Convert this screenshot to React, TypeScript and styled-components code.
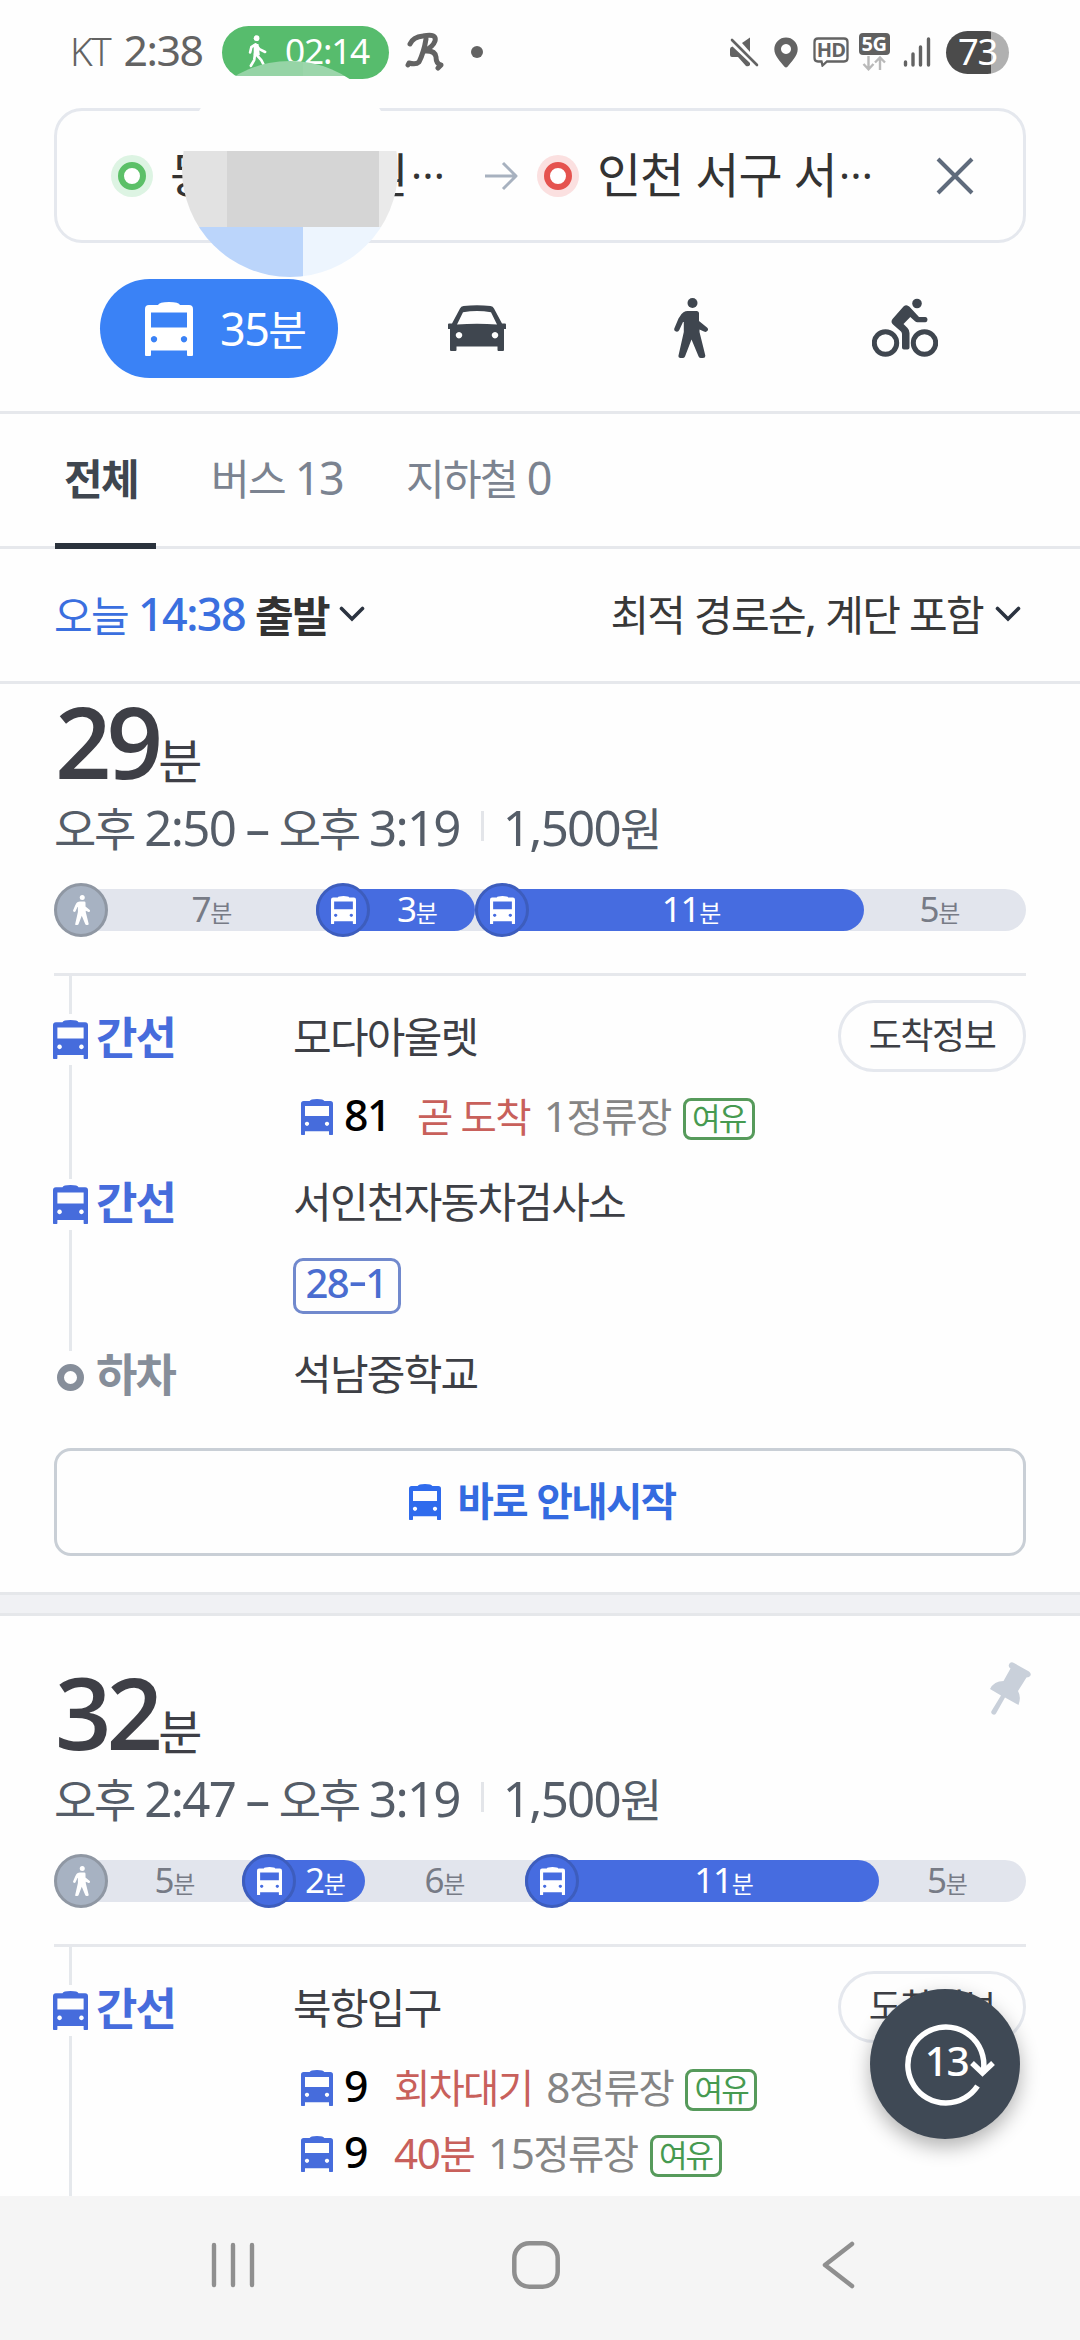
import React from "react";
import styled, { createGlobalStyle } from "styled-components";

const GlobalStyle = createGlobalStyle`
  *, *::before, *::after { box-sizing: border-box; }
  html, body { margin: 0; padding: 0; background: #fefefe; }
  body {
    font-family: "Noto Sans", "Open Sans", "Noto Sans CJK KR", sans-serif;
    color: #3d3f45;
    -webkit-font-smoothing: antialiased;
  }
`;

/* ---------- text ---------- */

const Line = styled.span<{ $size: number; $color?: string; $weight?: number; $ls?: number }>`
  display: inline-flex;
  align-items: baseline;
  white-space: pre;
  flex: none;
  font-size: ${(p) => p.$size}px;
  line-height: ${(p) => p.$size}px;
  font-weight: ${(p) => p.$weight ?? 400};
  color: ${(p) => p.$color ?? "inherit"};
  letter-spacing: ${(p) => p.$ls ?? -0.04}em;
`;
const Hangul = styled.span`
  font-family: "Noto Sans CJK KR", sans-serif;
  word-spacing: 0.05em;
`;
const Latin = styled.span`
  font-family: "Noto Sans", "Open Sans", sans-serif;
  font-size: 1.07em;
  letter-spacing: -0.035em;
`;
const Ellipsis = styled.span`
  font-family: "Open Sans", "Noto Sans", sans-serif;
  font-size: 0.92em;
  margin-left: 2px;
  transform: translateY(-14px);
`;

type TextProps = { size: number; color?: string; weight?: number; ls?: number; clipped?: boolean; children: string };
function Text({ size, color, weight, ls, clipped, children }: TextProps) {
  const runs = children.match(/[가-힣 ]+|[^가-힣 ]+/g) ?? [];
  return (
    <Line $size={size} $color={color} $weight={weight} $ls={ls}>
      {runs.map((run, i) => (/[가-힣 ]/.test(run) ? <Hangul key={i}>{run}</Hangul> : <Latin key={i}>{run}</Latin>))}
      {clipped && <Ellipsis>…</Ellipsis>}
    </Line>
  );
}

/* ---------- icons ---------- */

const Svg = styled.svg`
  display: block;
  flex: none;
`;

const BusIcon = ({ w, h, color }: { w: number; h: number; color: string }) => (
  <Svg width={w} height={h} viewBox="0 0 48 54" preserveAspectRatio="none">
    <path
      fill={color}
      fillRule="evenodd"
      d="M13 3Q14 0 24 0T35 3H44Q48 3 48 7V53Q48 54 47 54H43Q42 54 42 53V48.5H6V53Q6 54 5 54H1Q0 54 0 53V7Q0 3 4 3ZM6 10.5V25.5H42V10.5ZM9 34a3.2 3.2 0 1 0 .01 0ZM39 34a3.2 3.2 0 1 0 .01 0Z"
    />
  </Svg>
);

const CarIcon = () => (
  <Svg width={58} height={46} viewBox="0 0 58 46">
    <path
      fill="#3f464f"
      fillRule="evenodd"
      d="M12 3.5Q13 1.4 15.500 1.100Q29-.8 42.500 1.100Q45 1.400 46 3.500L54 18.500H57Q58 18.500 58 19.500V24H56V45Q56 46 55 46H50.500Q49.500 46 49.500 45V41.500H8.500V45Q8.500 46 7.500 46H3Q2 46 2 45V24H0V19.500Q0 18.500 1 18.500H4ZM15 7.200L9 19.500Q29 18.200 49 19.500L43 7.200Q29 4.800 15 7.200ZM11 27a3.200 3.200 0 1 0 .01 0ZM47 27a3.200 3.200 0 1 0 .01 0Z"
    />
  </Svg>
);

const WalkIcon = ({ w, h, color }: { w: number; h: number; color: string }) => (
  <Svg width={w} height={h} viewBox="0 0 34 60">
    <circle cx="18.500" cy="5" r="5" fill={color} />
    <path
      fill={color}
      d="M13.500 13H22.500Q25 13 25 15.500V23L33 29.500Q34.800 31 33.500 32.800T30 33.600L25.500 31.500V34L31.200 57Q31.800 60 29 60H27Q25.300 60 24.600 58.500L17.500 41.500L11 58.500Q10.300 60 8.500 60H6.500Q4 60 4.500 57.500L9.800 34V24H9L5.300 32Q4.300 34.300 2 33.600T.3 30.500L4.500 20.500Q7 15.500 9.500 14.200Q11.500 13 13.500 13Z"
    />
  </Svg>
);

const BikeIcon = () => (
  <Svg width={66} height={60} viewBox="0 0 66 60">
    <g fill="none" stroke="#3f464f" strokeWidth="5">
      <circle cx="13.500" cy="45" r="11.200" />
      <circle cx="52.500" cy="45" r="11.200" />
    </g>
    <circle cx="45" cy="5.500" r="4.800" fill="#3f464f" />
    <path
      fill="#3f464f"
      d="M31.500 8.500Q34.500 5.800 37.500 8.700L47 19H53.500Q55.500 19 55.500 21.500T53.500 24.300H45.500Q44 24.300 43 23.300L38.300 19L31.500 26L35.500 30Q37.500 32 37.500 35V49.500Q37.500 51.500 35.500 51.500H32Q30 51.500 30 49.500V36Q30 34.500 29 33.500L21 26.500Q18.300 24 20.500 21Z"
    />
  </Svg>
);

const Chevron = () => (
  <Svg width={26} height={18} viewBox="0 0 26 18">
    <path d="M2.500 3.500L13 14L23.500 3.500" fill="none" stroke="#2b3340" strokeWidth="3.600" strokeLinecap="round" />
  </Svg>
);

/* ---------- status bar ---------- */

const Screen = styled.div`
  position: relative;
  width: 1080px;
  height: 2340px;
  overflow: hidden;
  display: flex;
  flex-direction: column;
  background: #fefefe;
`;
const StatusBar = styled.div`
  height: 108px;
  padding: 25px 71px 0 70px;
  display: flex;
  justify-content: space-between;
  align-items: flex-start;
`;
const StatusGroup = styled.div<{ $gap: number }>`
  height: 54px;
  display: flex;
  align-items: center;
  gap: ${(p) => p.$gap}px;
`;
const Clock = styled.div`
  display: flex;
  align-items: baseline;
  gap: 13px;
  width: 138px;
  padding-bottom: 5px;
`;
const TimerPill = styled.div`
  width: 167px;
  height: 53px;
  margin-right: 2px;
  padding: 0 0 2px 26px;
  border-radius: 27px;
  background: #57bc6d;
  display: flex;
  align-items: center;
  gap: 18px;
`;
const TimerValue = styled.div`
  display: flex;
  padding-bottom: 1px;
`;
const Dot = styled.div`
  width: 12px;
  height: 12px;
  margin-left: 12px;
  border-radius: 50%;
  background: #636363;
`;
const NetworkBox = styled.div`
  width: 32px;
  height: 38px;
  margin-right: -2px;
  display: flex;
  flex-direction: column;
  align-items: center;
  gap: 1px;
`;
const NetworkLabel = styled.div`
  width: 31px;
  height: 22px;
  border-radius: 4px;
  background: #606060;
  color: #fff;
  font: 700 20px/22px "Open Sans", sans-serif;
  letter-spacing: -0.5px;
  text-align: center;
`;
const Battery = styled.div`
  width: 63px;
  height: 43px;
  padding-bottom: 2px;
  border-radius: 22px;
  background: linear-gradient(90deg, #4b4b4b 0 45px, #b0b0b0 45px);
  display: flex;
  align-items: center;
  justify-content: center;
`;

const Runner = () => (
  <Svg width={19} height={33} viewBox="0 0 20 34">
    <circle cx="9" cy="3" r="3" fill="#fff" />
    <g fill="none" stroke="#fff" strokeWidth="2.800" strokeLinecap="round" strokeLinejoin="round">
      <path d="M9 18L9.500 21L14 26L17 32" />
      <path d="M7.500 19L6.500 26L3 32" />
      <path d="M2.200 18L3.500 12.500L8 9.500L12 14.500L18 17.500" />
    </g>
    <path d="M6 9H11L12.500 21H6Z" fill="#fff" />
  </Svg>
);

const RunLogo = () => (
  <Svg width={40} height={40} viewBox="0 0 40 40">
    <g fill="none" stroke="#636363" strokeWidth="5" strokeLinecap="round" strokeLinejoin="round">
      <path d="M5 12Q8 5 18 4Q32 1 30 9Q28 15 19 19Q30 18 31 25Q31 32 36 33L33 36" />
      <path d="M21 7Q19 20 14 30Q11 33 4 31L3 33" />
    </g>
  </Svg>
);

const MuteIcon = () => (
  <Svg width={30} height={30} viewBox="0 0 30 30">
    <path d="M13 6L21 0.500V15Z" fill="#636363" />
    <path d="M3.500 9.500L21 26V28Q19.500 30 17 29L9 20H3Q1 20 1 18V12Q1 10 3.500 9.500Z" fill="#636363" />
    <path d="M4 1L29 27" stroke="#fefefe" strokeWidth="3" />
    <path d="M3 3L28 28" stroke="#636363" strokeWidth="2.600" strokeLinecap="round" />
  </Svg>
);
const PlaceIcon = () => (
  <Svg width={24} height={31} viewBox="0 0 24 31">
    <path
      fillRule="evenodd"
      fill="#636363"
      d="M12 0.500a11.700 11.700 0 0 1 11.700 11.700C23.700 19 17 25 13.500 29.700Q12 31.300 10.500 29.700C7 25 .3 19 .3 12.200A11.700 11.700 0 0 1 12 .5ZM12 7a5 5 0 1 0 .01 0Z"
    />
  </Svg>
);
const HdBox = styled.div`
  position: relative;
  width: 36px;
  height: 30px;
  margin-right: -6px;
  display: flex;
  justify-content: center;
  color: #636363;
  font: 700 20px/26px "Open Sans", sans-serif;
  letter-spacing: -0.8px;
`;
const HdBubble = styled(Svg)`
  position: absolute;
  inset: 0;
`;
const Signal = () => (
  <Svg width={28} height={30} viewBox="0 0 28 30">
    <g stroke="#636363" strokeWidth="3.400" strokeLinecap="round">
      <path d="M2.500 25V28" />
      <path d="M10 17V28" />
      <path d="M17.500 10V28" />
      <path d="M25.500 2V28" />
    </g>
  </Svg>
);

function Status() {
  return (
    <StatusBar>
      <StatusGroup $gap={14}>
        <Clock>
          <Text size={36} weight={300} color="#636363">KT</Text>
          <Text size={40} color="#636363">2:38</Text>
        </Clock>
        <TimerPill>
          <Runner />
          <TimerValue><Text size={33} color="#fff">02:14</Text></TimerValue>
        </TimerPill>
        <RunLogo />
        <Dot />
      </StatusGroup>
      <StatusGroup $gap={15}>
        <MuteIcon />
        <PlaceIcon />
        <HdBox>
          <HdBubble width={36} height={30} viewBox="0 0 36 30">
            <path
              d="M5 1.500H31Q34.500 1.500 34.500 5V21Q34.500 24.500 31 24.500H14L9.500 28.500L8.500 24.500H5Q1.500 24.500 1.500 21V5Q1.500 1.500 5 1.500Z"
              fill="none"
              stroke="#636363"
              strokeWidth="2.300"
            />
          </HdBubble>
          HD
        </HdBox>
        <NetworkBox>
          <NetworkLabel>5G</NetworkLabel>
          <Svg width={24} height={15} viewBox="0 0 24 15">
            <g fill="none" stroke="#b9b9b9" strokeWidth="2.400">
              <path d="M6.500 0V13M1.500 8L6.500 13.300L11.500 8" />
              <path d="M18 14V1.500M13 6.500L18 1.500L23 6.500" />
            </g>
          </Svg>
        </NetworkBox>
        <Signal />
        <Battery>
          <Text size={34} color="#fff">73</Text>
        </Battery>
      </StatusGroup>
    </StatusBar>
  );
}

/* ---------- search box ---------- */

const SearchBox = styled.div`
  height: 135px;
  margin: 0 54px;
  padding: 0 49px 0 54px;
  border: 3px solid #e5e8ee;
  border-radius: 28px;
  display: flex;
  align-items: center;
`;
const PlaceMark = styled.div<{ $ring: string; $halo: string }>`
  width: 42px;
  height: 42px;
  border-radius: 50%;
  background: ${(p) => p.$halo};
  display: grid;
  place-items: center;
  flex: none;
  &::after {
    content: "";
    width: 28px;
    height: 28px;
    border-radius: 50%;
    border: 6px solid ${(p) => p.$ring};
    background: #fff;
  }
`;
const Origin = styled.div`
  width: 275px;
  margin: 0 39px 4px 17px;
  display: flex;
  justify-content: space-between;
`;
const Destination = styled.div`
  flex: 1;
  margin: 0 0 4px 18px;
`;
const ArrowIcon = styled(Svg)`
  margin-right: 19px;
`;

const Mosaic = styled.div`
  position: absolute;
  left: 182px;
  top: 61px;
  width: 216px;
  height: 216px;
  border-radius: 50%;
  overflow: hidden;
  display: grid;
  grid-template-rows: 15px 75px 76px 50px;
`;
const MosaicRow = styled.div<{ $cols: string }>`
  display: grid;
  grid-template-columns: ${(p) => p.$cols};
`;
const Tile = styled.div<{ $c: string }>`
  background: ${(p) => p.$c};
`;

/* ---------- transport modes ---------- */

const Modes = styled.div`
  height: 171px;
  padding: 36px 142px 0 100px;
  border-bottom: 3px solid #e6e8ec;
  display: flex;
  align-items: flex-start;
`;
const ModeSlot = styled.div<{ $w: number }>`
  width: ${(p) => p.$w}px;
  height: 99px;
  padding-bottom: 1px;
  flex: none;
  display: flex;
  align-items: center;
  justify-content: center;
`;
const ActiveMode = styled.div`
  width: 238px;
  height: 99px;
  padding-left: 45px;
  border-radius: 50px;
  background: #3a82f6;
  display: flex;
  align-items: center;
  gap: 27px;
  flex: none;
`;

/* ---------- tabs and filter ---------- */

const Tabs = styled.div`
  height: 135px;
  padding-left: 55px;
  border-bottom: 3px solid #e6e8ec;
  display: flex;
  flex: none;
`;
const Tab = styled.div<{ $active?: boolean; $w: number; $gap?: number }>`
  width: ${(p) => p.$w}px;
  height: 135px;
  margin-left: ${(p) => p.$gap ?? 0}px;
  padding: 0 0 3px 9px;
  border-bottom: 6px solid ${(p) => (p.$active ? "#2a323c" : "transparent")};
  display: flex;
  align-items: center;
`;
const Filter = styled.div`
  height: 135px;
  padding: 0 59px 3px 54px;
  border-bottom: 3px solid #e6e8ec;
  display: flex;
  justify-content: space-between;
  align-items: center;
  flex: none;
`;
const FilterGroup = styled.div<{ $gap: number }>`
  display: flex;
  align-items: center;
  gap: ${(p) => p.$gap}px;
`;

/* ---------- results ---------- */

const Results = styled.div`
  flex: 1;
  min-height: 0;
  overflow: hidden;
  display: flex;
  flex-direction: column;
`;
const Card = styled.section<{ $top: number }>`
  position: relative;
  padding: ${(p) => p.$top}px 54px 0;
  flex: none;
`;
const Band = styled.div`
  height: 24px;
  border-top: 3px solid #e5e7ea;
  border-bottom: 3px solid #e5e7ea;
  background: #f0f1f4;
  flex: none;
`;
const Duration = styled.div`
  height: 82px;
  padding-left: 1px;
  display: flex;
  align-items: baseline;
`;
const DurationNumber = styled.span`
  font: 600 99px/82px "Open Sans", sans-serif;
  letter-spacing: -5px;
  color: #3e3f46;
`;
const Times = styled.div`
  height: 54px;
  margin-top: 17px;
  display: flex;
  align-items: center;
`;
const Separator = styled.div`
  width: 3px;
  height: 30px;
  margin: 0 19px 0 21px;
  background: #e3e5e9;
`;

const Bar = styled.div`
  position: relative;
  height: 42px;
  margin-top: 36px;
  border-radius: 21px;
  background: #e2e5ed;
  display: flex;
`;
const Segment = styled.div<{ $bus?: boolean; $last?: boolean }>`
  height: 42px;
  flex: none;
  border-radius: 21px;
  background: ${(p) => (p.$bus ? "#466ce0" : "transparent")};
  color: ${(p) => (p.$bus ? "#fff" : "#777b86")};
  padding-right: ${(p) => (p.$bus || p.$last ? 10 : 0)}px;
  display: flex;
  align-items: center;
`;
const Knob = styled.div<{ $bus?: boolean }>`
  width: 54px;
  height: 54px;
  flex: none;
  border-radius: 50%;
  border: 3px solid ${(p) => (p.$bus ? "#3d5dbd" : "#8f97a3")};
  background: ${(p) => (p.$bus ? "#466ce0" : "#a7b2c2")};
  display: grid;
  place-items: center;
`;
const SegmentLabel = styled.div`
  flex: 1;
  height: 42px;
  display: flex;
  align-items: baseline;
  justify-content: center;
  line-height: 42px;
`;
const SegNumber = styled.span`
  font: 400 35px/40px "Noto Sans", "Open Sans", sans-serif;
  letter-spacing: -1.3px;
`;
const SegUnit = styled.span`
  font: 400 24px/40px "Noto Sans CJK KR", sans-serif;
`;

const Steps = styled.div`
  margin-top: 42px;
  border-top: 3px solid #e6e8ec;
  display: flex;
  flex-direction: column;
`;
const Step = styled.div<{ $h: number }>`
  height: ${(p) => p.$h}px;
  display: flex;
`;
const Rail = styled.div`
  width: 34px;
  margin-left: -1px;
  display: flex;
  flex-direction: column;
  align-items: center;
`;
const RailLine = styled.div<{ $h?: number }>`
  width: 3px;
  margin-left: 1px;
  ${(p) => (p.$h === undefined ? "flex: 1;" : `height: ${p.$h}px; flex: none;`)}
  background: #e5e8ec;
`;
const RailIcon = styled.div`
  height: 51px;
  flex: none;
  display: grid;
  place-items: center;
`;
const StopRing = styled.div`
  width: 27px;
  height: 27px;
  margin-top: 2px;
  border-radius: 50%;
  border: 7px solid #868e9a;
`;
const Kind = styled.div<{ $top: number }>`
  width: 197px;
  height: 51px;
  margin: ${(p) => p.$top}px 0 0 9px;
  display: flex;
  align-items: center;
  flex: none;
`;
const StopBody = styled.div<{ $top: number }>`
  flex: 1;
  margin-top: ${(p) => p.$top}px;
  display: flex;
  flex-direction: column;
`;
const StopHead = styled.div`
  height: 51px;
  flex: none;
  display: flex;
  align-items: center;
  justify-content: space-between;
`;
const ArrivalButton = styled.button`
  width: 188px;
  height: 72px;
  margin-top: 3px;
  padding: 0 0 6px;
  border: 3px solid #e5e8ee;
  border-radius: 36px;
  background: transparent;
  display: flex;
  align-items: center;
  justify-content: center;
  flex: none;
`;
const Arrivals = styled.div`
  margin: 24px 0 0 8px;
  display: flex;
  flex-direction: column;
`;
const Arrival = styled.div`
  height: 66px;
  display: flex;
  align-items: center;
`;
const ArrivalText = styled.div<{ $gap: number }>`
  display: flex;
  padding-bottom: 4px;
  margin-left: ${(p) => p.$gap}px;
`;
const SeatBadge = styled.div`
  width: 72px;
  height: 42px;
  margin: 3px 0 0 12px;
  padding-bottom: 4px;
  border: 3px solid #569a5b;
  border-radius: 8px;
  display: flex;
  align-items: center;
  justify-content: center;
`;
const RouteBadge = styled.div`
  width: 108px;
  height: 56px;
  margin-top: 33px;
  flex: none;
  padding: 0 2px 6px 0;
  border: 3px solid #7189cd;
  border-radius: 10px;
  display: flex;
  align-items: center;
  justify-content: center;
`;
const RouteNumber = styled.span`
  display: inline-flex;
  align-items: baseline;
  font: 500 40px/42px "Noto Sans", "Open Sans", sans-serif;
  letter-spacing: -1.6px;
  color: #4a6dd0;
`;
const Dash = styled.span`
  margin: 0 3px;
  transform: scaleX(1.45) translateY(-3px);
`;
const StartButton = styled.button`
  width: 972px;
  height: 108px;
  margin: 25px 0 36px;
  padding: 0 0 1px 4px;
  border: 3px solid #c9cfd6;
  border-radius: 17px;
  background: transparent;
  display: flex;
  align-items: center;
  justify-content: center;
  gap: 17px;
`;
const StartLabel = styled.span`
  display: flex;
  padding-bottom: 5px;
`;
const Pin = styled(Svg)`
  position: absolute;
  left: 990px;
  top: 46px;
`;

const INK = "#3d3f45";
const BUS = "#466cdc";

type Leg = { width: number; minutes: number; bus?: boolean; knob?: boolean };
type Bus = { no: string; status: string; stops: string };
type Stop = { name: string; height: number; lead: number; info?: boolean; buses?: Bus[]; route?: string; last?: boolean };

function Timeline({ legs }: { legs: Leg[] }) {
  return (
    <Bar>
      {legs.map((leg, i) => (
        <Segment key={i} $bus={leg.bus} $last={i === legs.length - 1} style={{ width: leg.width }}>
          {leg.knob && (
            <Knob $bus={leg.bus}>
              {leg.bus ? <BusIcon w={25} h={28} color="#fff" /> : <WalkIcon w={17} h={30} color="#fff" />}
            </Knob>
          )}
          <SegmentLabel>
            <SegNumber>{leg.minutes}</SegNumber>
            <SegUnit>분</SegUnit>
          </SegmentLabel>
        </Segment>
      ))}
    </Bar>
  );
}

function RouteTag({ route }: { route: string }) {
  const [line, branch] = route.split("-");
  return (
    <RouteBadge>
      <RouteNumber>
        <span>{line}</span>
        <Dash>-</Dash>
        <span>{branch}</span>
      </RouteNumber>
    </RouteBadge>
  );
}

function StopRow({ stop }: { stop: Stop }) {
  return (
    <Step $h={stop.height}>
      <Rail>
        <RailLine $h={stop.lead} />
        <RailIcon>{stop.last ? <StopRing /> : <BusIcon w={35} h={39} color={BUS} />}</RailIcon>
        {!stop.last && <RailLine />}
      </Rail>
      <Kind $top={stop.lead - 4}>
        <Text size={45} weight={700} color={stop.last ? "#868e9a" : BUS}>{stop.last ? "하차" : "간선"}</Text>
      </Kind>
      <StopBody $top={stop.lead - 5}>
        <StopHead>
          <Text size={42} color={INK} ls={-0.042}>{stop.name}</Text>
          {stop.info && (
            <ArrivalButton>
              <Text size={36} color={INK}>도착정보</Text>
            </ArrivalButton>
          )}
        </StopHead>
        {stop.buses && (
          <Arrivals>
            {stop.buses.map((bus, i) => (
              <Arrival key={i}>
                <BusIcon w={32} h={36} color={BUS} />
                <ArrivalText $gap={11}><Text size={40} weight={500} color="#000">{bus.no}</Text></ArrivalText>
                <ArrivalText $gap={27}><Text size={39.5} ls={-0.045} color="#c8605b">{bus.status}</Text></ArrivalText>
                <ArrivalText $gap={14}><Text size={39.5} color="#858585">{bus.stops}</Text></ArrivalText>
                <SeatBadge><Text size={31} ls={-0.06} color="#469a50">여유</Text></SeatBadge>
              </Arrival>
            ))}
          </Arrivals>
        )}
        {stop.route && <RouteTag route={stop.route} />}
      </StopBody>
    </Step>
  );
}

type RouteProps = { top: number; minutes: number; from: string; to: string; legs: Leg[]; stops: Stop[]; children?: React.ReactNode };
function RouteCard({ top, minutes, from, to, legs, stops, children }: RouteProps) {
  return (
    <Card $top={top}>
      <Duration>
        <DurationNumber>{minutes}</DurationNumber>
        <Text size={48} color="#3e3f46">분</Text>
      </Duration>
      <Times>
        <Text size={46} ls={-0.05} color="#555d68">{`${from} – ${to}`}</Text>
        <Separator />
        <Text size={46} ls={-0.05} color="#555d68">1,500원</Text>
      </Times>
      <Timeline legs={legs} />
      <Steps>{stops.map((s) => <StopRow key={s.name} stop={s} />)}</Steps>
      {children}
    </Card>
  );
}

/* ---------- floating button and system navigation ---------- */

const RefreshButton = styled.div`
  position: absolute;
  left: 870px;
  top: 1989px;
  width: 150px;
  height: 150px;
  padding: 0 0 6px 3px;
  border-radius: 50%;
  background: #3f4955;
  box-shadow: 0 8px 20px rgba(0, 0, 0, 0.3);
  display: grid;
  place-items: center;
`;
const RefreshRing = styled(Svg)`
  position: absolute;
  inset: 0;
`;
const NavBar = styled.div`
  height: 144px;
  padding: 0 225px 6px 209px;
  background: #f5f5f5;
  display: flex;
  align-items: center;
  justify-content: space-between;
  flex: none;
`;
const HomeIcon = styled(Svg)`
  margin-right: 7px;
`;

export default function App() {
  return (
    <Screen>
      <GlobalStyle />
      <Status />
      <SearchBox>
        <PlaceMark $ring="#5cc068" $halo="#ddf4e3" />
        <Origin>
          <Text size={48} color="#333" ls={0}>동</Text>
          <Text size={48} color="#333" ls={0} clipped>원</Text>
        </Origin>
        <ArrowIcon width={34} height={30} viewBox="0 0 34 30">
          <path d="M1 15H32M19 2L32 15L19 28" fill="none" stroke="#a7b1bf" strokeWidth="3" strokeLinejoin="round" />
        </ArrowIcon>
        <PlaceMark $ring="#e5534f" $halo="#fbe0e0" />
        <Destination>
          <Text size={48} color="#333" ls={-0.022} clipped>인천 서구 서</Text>
        </Destination>
        <Svg width={38} height={38} viewBox="0 0 38 38">
          <path d="M2 2L36 36M36 2L2 36" stroke="#5f6b7c" strokeWidth="4" />
        </Svg>
      </SearchBox>
      <Mosaic>
        <MosaicRow $cols="121px 1fr"><Tile $c="#96d4a6" /><Tile $c="#9cd6ab" /></MosaicRow>
        <MosaicRow $cols="1fr"><Tile $c="#fefefe" /></MosaicRow>
        <MosaicRow $cols="45px 152px 1fr"><Tile $c="#e2e2e2" /><Tile $c="#d5d5d5" /><Tile $c="#eaeaea" /></MosaicRow>
        <MosaicRow $cols="121px 1fr"><Tile $c="#bbd5fb" /><Tile $c="#edf5fe" /></MosaicRow>
      </Mosaic>
      <Modes>
        <ActiveMode>
          <BusIcon w={48} h={54} color="#fff" />
          <Text size={42} color="#fff">35분</Text>
        </ActiveMode>
        <ModeSlot $w={278}><CarIcon /></ModeSlot>
        <ModeSlot $w={150}><WalkIcon w={34} h={60} color="#3f464f" /></ModeSlot>
        <ModeSlot $w={278}><BikeIcon /></ModeSlot>
      </Modes>
      <Tabs>
        <Tab $active $w={101}><Text size={42} weight={700} color="#3f464f">전체</Text></Tab>
        <Tab $w={195} $gap={46}><Text size={42} color="#7b8390">버스 13</Text></Tab>
        <Tab $w={200}><Text size={42} color="#7b8390">지하철 0</Text></Tab>
      </Tabs>
      <Filter>
        <FilterGroup $gap={10}>
          <Text size={42} color="#3a6fdf">오늘</Text>
          <Text size={42} color="#3a6fdf" weight={500}>14:38</Text>
          <Text size={42} color="#333" weight={700}>출발</Text>
          <Chevron />
        </FilterGroup>
        <FilterGroup $gap={12}>
          <Text size={42} color="#383838">최적 경로순, 계단 포함</Text>
          <Chevron />
        </FilterGroup>
      </Filter>
      <Results>
        <RouteCard
          top={16}
          minutes={29}
          from="오후 2:50"
          to="오후 3:19"
          legs={[
            { width: 262, minutes: 7, knob: true },
            { width: 159, minutes: 3, bus: true, knob: true },
            { width: 389, minutes: 11, bus: true, knob: true },
            { width: 162, minutes: 5 },
          ]}
          stops={[
            { name: "모다아울렛", height: 203, lead: 38, info: true, buses: [{ no: "81", status: "곧 도착", stops: "1정류장" }] },
            { name: "서인천자동차검사소", height: 172, lead: 0, route: "28-1" },
            { name: "석남중학교", height: 72, lead: 0, last: true },
          ]}
        >
          <StartButton>
            <BusIcon w={32} h={36} color="#2f6bed" />
            <StartLabel><Text size={39.5} weight={700} color="#346be0">바로 안내시작</Text></StartLabel>
          </StartButton>
        </RouteCard>
        <Band />
        <RouteCard
          top={55}
          minutes={32}
          from="오후 2:47"
          to="오후 3:19"
          legs={[
            { width: 188, minutes: 5, knob: true },
            { width: 123, minutes: 2, bus: true, knob: true },
            { width: 160, minutes: 6 },
            { width: 354, minutes: 11, bus: true, knob: true },
            { width: 147, minutes: 5 },
          ]}
          stops={[
            {
              name: "북항입구",
              height: 260,
              lead: 38,
              info: true,
              buses: [
                { no: "9", status: "회차대기", stops: "8정류장" },
                { no: "9", status: "40분", stops: "15정류장" },
              ],
            },
          ]}
        >
          <Pin width={41} height={53} viewBox="0 0 41 53">
            <path
              fill="#c9d0da"
              d="M19.500 1.500Q21.500-.8 24 1L39 9.500Q41.500 11.500 40.500 13.500T36.500 15.500L28 29Q31.500 35 28.500 43L15 35.500L6 51.500Q4.500 53.500 2.500 52.300T1.500 49L11 33.500L0 27Q4 19 13.500 19L20.500 6.500Q17.500 4.500 19.500 1.500Z"
            />
          </Pin>
        </RouteCard>
      </Results>
      <RefreshButton>
        <RefreshRing width={150} height={150} viewBox="0 0 150 150">
          <g fill="none" stroke="#fff" strokeWidth="5.500">
            <path d="M107.500 97A38 38 0 1 1 113 84" />
            <path d="M102 74L112.500 84L123 74" />
          </g>
        </RefreshRing>
        <Text size={38} weight={500} color="#fff">13</Text>
      </RefreshButton>
      <NavBar>
        <Svg width={48} height={48} viewBox="0 0 48 48">
          <path d="M5 4V44M24 4V44M43 4V44" stroke="#8f8f8f" strokeWidth="4.400" strokeLinecap="round" />
        </Svg>
        <HomeIcon width={48} height={48} viewBox="0 0 48 48">
          <rect x="2.300" y="2.300" width="43.400" height="43.400" rx="15" fill="none" stroke="#8f8f8f" strokeWidth="4.500" />
        </HomeIcon>
        <Svg width={34} height={48} viewBox="0 0 34 48">
          <path d="M31 3L4 24L31 45" fill="none" stroke="#8f8f8f" strokeWidth="4.500" strokeLinecap="round" strokeLinejoin="round" />
        </Svg>
      </NavBar>
    </Screen>
  );
}
